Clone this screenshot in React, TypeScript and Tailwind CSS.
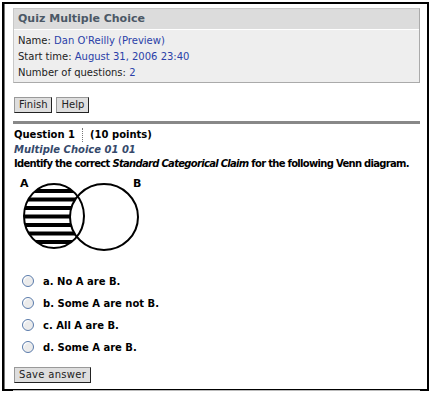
import React from "react";

const options = [
  { key: "a", text: "No A are B." },
  { key: "b", text: "Some A are not B." },
  { key: "c", text: "All A are B." },
  { key: "d", text: "Some A are B." },
];

const stripes = [15, 23.5, 32, 40.5, 49, 57.5, 66];

function Venn() {
  return (
    <svg width="140" height="82" viewBox="0 0 140 82">
      <defs>
        <mask id="onlyA">
          <rect x="0" y="0" width="140" height="82" fill="black" />
          <ellipse cx="40" cy="42" rx="30" ry="32" fill="white" />
          <ellipse cx="90" cy="43" rx="34" ry="33" fill="black" />
        </mask>
      </defs>
      <g mask="url(#onlyA)">
        {stripes.map((y) => (
          <rect key={y} x="0" y={y} width="140" height="4" fill="black" />
        ))}
      </g>
      <ellipse cx="40" cy="42" rx="30" ry="32" fill="none" stroke="black" strokeWidth="2" />
      <ellipse cx="90" cy="43" rx="34" ry="33" fill="none" stroke="black" strokeWidth="2" />
      <text x="6" y="13" fontFamily="DejaVu Sans, sans-serif" fontWeight="bold" fontSize="11">
        A
      </text>
      <text x="119" y="13" fontFamily="DejaVu Sans, sans-serif" fontWeight="bold" fontSize="11">
        B
      </text>
    </svg>
  );
}

function Btn({ label, className = "" }: { label: string; className?: string }) {
  return (
    <button
      className={`h-[16px] px-[4px] bg-[#dedede] border border-[#999] border-r-[#222] border-b-[#222] text-[10px] leading-none text-[#222] ${className}`}
    >
      {label}
    </button>
  );
}

export default function App() {
  return (
    <div className="w-[431px] h-[393px] bg-white pt-[2px] pl-[2px] font-['DejaVu_Sans',sans-serif]">
      <div className="w-[427px] h-[389px] border-2 border-black shadow-[inset_1px_0_0_#777] pt-[4px] pl-[9px]">
        <div className="w-[407px] border border-[#c8c8c8] border-r-[#aaa] border-b-[#aaa] bg-[#eeeeee]">
          <div className="h-[21px] bg-[#dcdcdc] border-b border-white pl-[4px] flex items-center text-[11px] font-bold text-[#4b5866]">
            Quiz Multiple Choice
          </div>
          <div className="pl-[4px] pt-[3px] pb-[1px] text-[10px] text-[#222] leading-[16px]">
            <div>
              Name: <span className="text-[#2a3fa8]">Dan O'Reilly (Preview)</span>
            </div>
            <div>
              Start time: <span className="text-[#2a3fa8]">August 31, 2006 23:40</span>
            </div>
            <div>
              Number of questions: <span className="text-[#2a3fa8]">2</span>
            </div>
          </div>
        </div>

        <div className="flex gap-[4px] mt-[14px] pl-[1px]">
          <Btn label="Finish" />
          <Btn label="Help" />
        </div>

        <div className="w-[407px] h-[3px] bg-[#888] mt-[8px]" />

        <div className="w-[407px] border-b border-[#bbb] h-[263px] pl-[1px]">
          <div className="flex items-center mt-[4px] text-[10px] font-bold text-black leading-[14px]">
            <span>Question 1</span>
            <span className="mx-[7px] h-[14px] border-l border-dotted border-[#777]" />
            <span>(10 points)</span>
          </div>
          <div className="text-[10px] font-bold italic text-[#35496b] leading-[14px] mt-[1px]">
            Multiple Choice 01 01
          </div>
          <div className="text-[10px] font-bold text-black leading-[14px] tracking-[-0.7px] whitespace-nowrap">
            Identify the correct <i>Standard Categorical Claim</i> for the following Venn diagram.
          </div>

          <div className="mt-[3px]">
            <Venn />
          </div>

          <div className="mt-[19px] flex flex-col gap-[10px] pl-[8px]">
            {options.map((o) => (
              <label key={o.key} className="flex items-center gap-[9px] h-[12px]">
                <span className="w-[12px] h-[12px] rounded-full border border-[#5a7bab] bg-[#ebebeb] shadow-[inset_1px_1px_1px_#fff]" />
                <span className="text-[10px] font-bold text-black">
                  {o.key}. {o.text}
                </span>
              </label>
            ))}
          </div>

          <div className="mt-[8px]">
            <Btn label="Save answer" className="tracking-[0.3px]" />
          </div>
        </div>
      </div>
    </div>
  );
}
